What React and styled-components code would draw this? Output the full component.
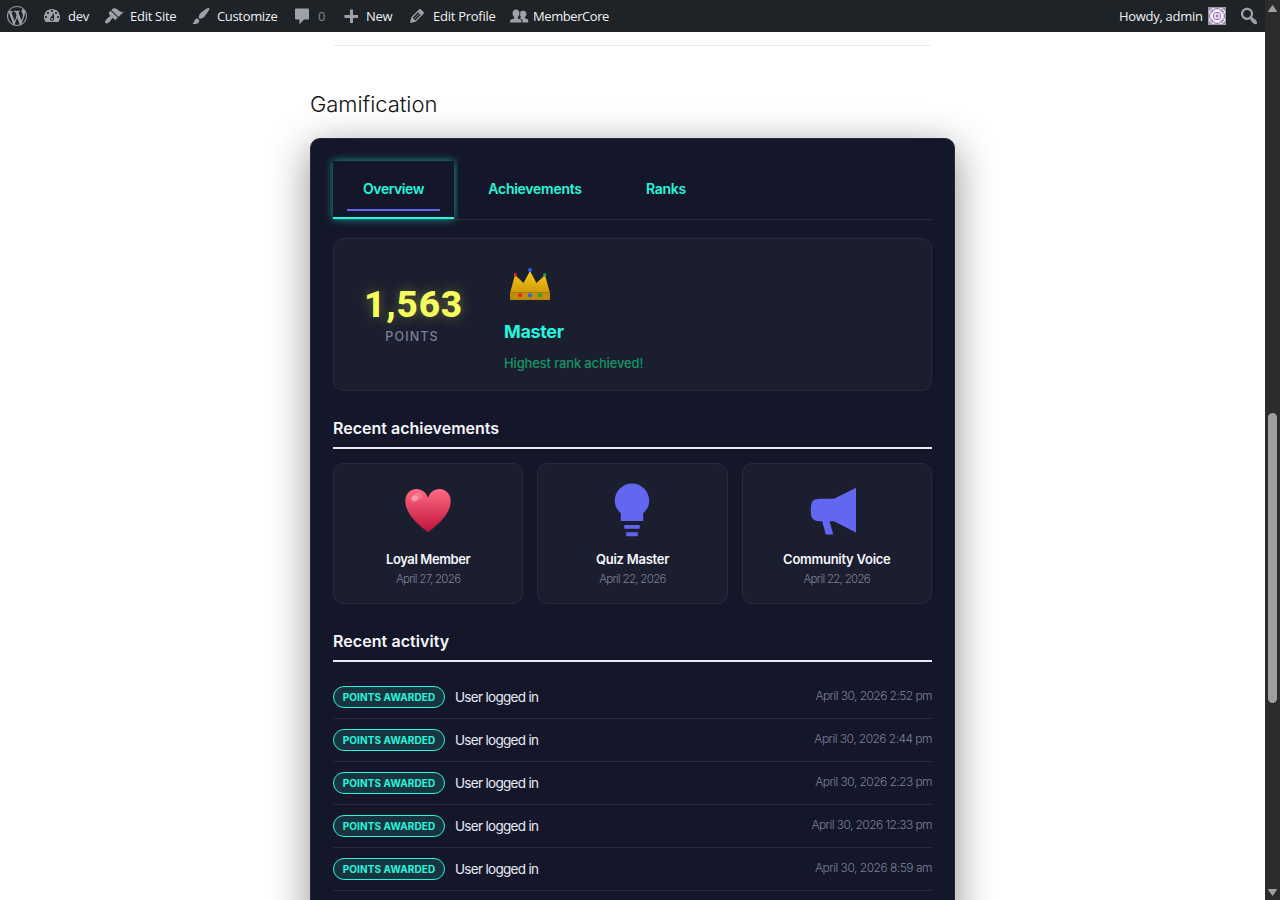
import styled, { createGlobalStyle } from "styled-components";

const GlobalStyle = createGlobalStyle`
  * {
    box-sizing: border-box;
  }
  body {
    margin: 0;
    background: #fff;
    overflow: hidden;
    font-family: Inter, "Liberation Sans", sans-serif;
  }
`;

const Window = styled.div`
  display: grid;
  grid-template-columns: 1fr 15px;
  width: 1280px;
  height: 900px;
  overflow: hidden;
`;

const Page = styled.div`
  display: flex;
  flex-direction: column;
  height: 900px;
  overflow: hidden;
`;

const AdminBar = styled.header`
  display: flex;
  align-items: center;
  flex: none;
  height: 32px;
  padding: 0 6px 0 7px;
  background: #1d2327;
  color: #f0f0f1;
  font-family: "Open Sans", "Noto Sans", sans-serif;
  font-size: 13px;
  position: relative;
  z-index: 1;
`;

const AdminItem = styled.div`
  display: flex;
  align-items: center;
  width: ${(props) => props.width}px;
  gap: ${(props) => props.gap || 6}px;
  margin-left: ${(props) => props.push || "0"};
  color: ${(props) => (props.muted ? "#7f868c" : "inherit")};
  letter-spacing: ${(props) => props.tracking || 0}px;
  white-space: nowrap;
`;

const AdminIcon = styled.svg`
  flex: none;
  width: 20px;
  height: 20px;
  fill: #9ca2a7;
`;

const Avatar = styled.svg`
  flex: none;
  width: 18px;
  height: 18px;
`;

const Content = styled.main`
  width: 645px;
  margin: 0 auto;
`;

const Divider = styled.hr`
  height: 1px;
  margin: 13px 24px 0;
  border: 0;
  background: #ececec;
`;

const PageTitle = styled.h2`
  height: 30px;
  margin: 43px 0 19px;
  color: #111;
  font-size: 22px;
  font-weight: 300;
  line-height: 30px;
  letter-spacing: -0.04px;
`;

const Card = styled.section`
  height: 900px;
  padding: 22px;
  border: 1px solid #272a3d;
  border-radius: 10px;
  background: #141729;
  box-shadow: 0 10px 40px rgba(0, 0, 0, 0.45);
`;

const Tabs = styled.nav`
  display: flex;
  gap: 4px;
  height: 59px;
  border-bottom: 1px solid #272a3b;
`;

const Tab = styled.button`
  position: relative;
  flex: none;
  width: ${(props) => props.width}px;
  height: 58px;
  padding: 0 0 2px;
  border: 0;
  border-bottom: 2px solid ${(props) => (props.active ? "#23f7dd" : "transparent")};
  background: #141729;
  color: #23f7dd;
  box-shadow: ${(props) =>
    props.active ? "0 0 8px rgba(35, 247, 221, 0.6)" : "none"};
  font: 600 14px Inter, sans-serif;
  letter-spacing: ${(props) => props.tracking}px;

  &::after {
    content: "";
    display: ${(props) => (props.active ? "block" : "none")};
    position: absolute;
    right: 14px;
    bottom: 6px;
    left: 14px;
    height: 2px;
    background: #6366f1;
  }
`;

const Summary = styled.div`
  display: flex;
  align-items: flex-start;
  height: 153px;
  margin-top: 18px;
  border: 1px solid #272a3b;
  border-radius: 10px;
  background: #1b1e2e;
`;

const Points = styled.div`
  width: 170px;
  padding: 42px 14px 0 0;
  text-align: center;
`;

const PointsValue = styled.div`
  height: 47px;
  padding-left: 3px;
  color: #f5ff5e;
  font: 800 37px/47px Roboto, sans-serif;
  letter-spacing: 0.8px;
  text-shadow: 0 0 12px rgba(245, 255, 94, 0.35);
`;

const PointsLabel = styled.div`
  color: #7d8098;
  font-size: 12.5px;
  font-weight: 500;
  line-height: 18px;
  letter-spacing: 1.1px;
`;

const Rank = styled.div`
  display: flex;
  flex-direction: column;
  padding-top: 21px;
`;

const CrownIcon = styled.svg`
  width: 52px;
  height: 52px;
`;

const RankName = styled.div`
  height: 28px;
  margin-top: 6px;
  color: #23f7dd;
  font-size: 18px;
  font-weight: 700;
  line-height: 28px;
  letter-spacing: -0.35px;
`;

const RankNote = styled.div`
  margin-top: 7px;
  color: #129567;
  font-size: 13px;
  font-weight: 500;
  line-height: 20px;
  letter-spacing: -0.15px;
`;

const SectionTitle = styled.h3`
  height: 33px;
  margin: 25px 0 14px;
  border-bottom: 2px solid #e8eaf6;
  color: #f5f6fc;
  font-size: 16px;
  font-weight: 600;
  line-height: 24px;
  letter-spacing: ${(props) => props.tracking}px;
`;

const AchievementGrid = styled.div`
  display: grid;
  grid-template-columns: repeat(3, 1fr);
  gap: 14px;
`;

const Achievement = styled.article`
  display: flex;
  flex-direction: column;
  align-items: center;
  height: 141px;
  padding-top: 18px;
  border: 1px solid #272a3b;
  border-radius: 10px;
  background: #1b1e2e;
`;

const AchievementIcon = styled.svg`
  width: 56px;
  height: 56px;
  fill: #6366f1;
`;

const AchievementName = styled.div`
  margin-top: 11px;
  color: #f5f6fc;
  font-size: 13px;
  font-weight: 600;
  line-height: 20px;
  letter-spacing: ${(props) => props.tracking}px;
`;

const AchievementDate = styled.div`
  color: #7d8098;
  font-size: 11.5px;
  font-weight: 300;
  line-height: 20px;
  letter-spacing: -0.7px;
`;

const ActivityRow = styled.div`
  display: flex;
  align-items: center;
  height: 43px;
  border-bottom: 1px solid #272a3b;
`;

const Badge = styled.span`
  display: flex;
  align-items: center;
  justify-content: center;
  width: 112px;
  height: 22px;
  border: 1px solid #23f7dd;
  border-radius: 11px;
  background: #183441;
  color: #23f7dd;
  font-size: 10px;
  font-weight: 700;
  letter-spacing: 0.1px;
  white-space: nowrap;
`;

const ActivityText = styled.span`
  margin-left: 10px;
  color: #e8eaf6;
  font-size: 13.5px;
  letter-spacing: -0.7px;
`;

const ActivityTime = styled.time`
  margin: -3px 0 0 auto;
  color: #7d8098;
  font-size: 12px;
  font-weight: 300;
  letter-spacing: ${(props) => props.tracking}px;
`;

const Scrollbar = styled.div`
  display: flex;
  flex-direction: column;
  align-items: center;
  justify-content: space-between;
  padding: 5px 0 4px;
  background: #2c2c2c;
`;

const ScrollArrow = styled.svg`
  width: 9px;
  height: 7px;
  fill: #9f9f9f;
`;

const ScrollThumb = styled.div`
  width: 9px;
  height: 290px;
  margin-top: 215px;
  border-radius: 5px;
  background: #9f9f9f;
`;

const icons = {
  wordpress:
    "M20 10c0-5.51-4.49-10-10-10C4.48 0 0 4.49 0 10c0 5.52 4.48 10 10 10 5.51 0 10-4.48 10-10zM7.78 15.37L4.37 6.22c.55-.02 1.17-.08 1.17-.08.5-.06.44-1.13-.06-1.11 0 0-1.45.11-2.37.11-.18 0-.37 0-.58-.01C4.12 2.69 6.87 1.11 10 1.11c2.33 0 4.45.87 6.05 2.34-.68-.11-1.65.39-1.65 1.58 0 .74.45 1.36.9 2.1.35.61.55 1.36.55 2.46 0 1.49-1.4 5-1.4 5l-3.03-8.37c.54-.02.82-.17.82-.17.5-.05.44-1.25-.06-1.22 0 0-1.44.12-2.38.12-.87 0-2.33-.12-2.33-.12-.5-.03-.56 1.2-.06 1.22l.92.08 1.26 3.41zM17.41 10c.24-.64.74-1.87.43-4.25.7 1.29 1.05 2.71 1.05 4.25 0 3.29-1.73 6.24-4.4 7.78.97-2.59 1.94-5.2 2.92-7.78zM6.1 18.09C3.12 16.65 1.11 13.53 1.11 10c0-1.3.23-2.48.72-3.59C3.25 10.3 4.67 14.2 6.1 18.09zm4.03-6.63l2.58 6.98c-.86.29-1.76.45-2.71.45-.79 0-1.57-.11-2.29-.33.81-2.38 1.62-4.74 2.42-7.1z",
  dashboard:
    "M3.76 16h12.48c1.1-1.37 1.76-3.11 1.76-5 0-4.42-3.58-8-8-8s-8 3.58-8 8c0 1.89.66 3.63 1.76 5zM10 4c.55 0 1 .45 1 1s-.45 1-1 1-1-.45-1-1 .45-1 1-1zM6 6c.55 0 1 .45 1 1s-.45 1-1 1-1-.45-1-1 .45-1 1-1zm8 0c.55 0 1 .45 1 1s-.45 1-1 1-1-.45-1-1 .45-1 1-1zm-5.37 5.55L12 7v6c0 1.1-.9 2-2 2s-2-.9-2-2c0-.57.24-1.08.63-1.45zM4 10c.55 0 1 .45 1 1s-.45 1-1 1-1-.45-1-1 .45-1 1-1zm12 0c.55 0 1 .45 1 1s-.45 1-1 1-1-.45-1-1 .45-1 1-1zm-5 3c0-.55-.45-1-1-1s-1 .45-1 1 .45 1 1 1 1-.45 1-1z",
  appearance:
    "M14.48 11.06L7.41 3.99l1.5-1.5c.5-.56 2.3-.47 3.51.32 1.21.8 1.43 1.28 2.91 2.1 1.18.64 2.45 1.26 4.45.85zm-.71.71L6.7 4.7 4.93 6.47c-.39.39-.39 1.02 0 1.41l1.06 1.06c.39.39.39 1.03 0 1.42-.6.6-1.43 1.11-2.21 1.69-.35.26-.7.53-1.01.84C1.43 14.23.4 16.08 1.4 17.07c.99 1 2.84-.03 4.18-1.36.31-.31.58-.66.85-1.02.57-.78 1.08-1.61 1.69-2.21.39-.39 1.02-.39 1.41 0l1.06 1.06c.39.39 1.02.39 1.41 0z",
  customize:
    "M18.33 3.57s.27-.8-.31-1.36c-.53-.52-1.22-.24-1.22-.24-.61.3-5.76 3.47-7.67 5.57-.86.96-2.06 3.79-1.09 4.82.92.98 3.96-.17 4.79-1 2.06-2.06 5.21-7.17 5.5-7.79zM1.4 17.65c2.37-1.56 1.46-3.41 3.23-4.64.93-.65 2.22-.62 3.08.29.63.67.8 2.57-.16 3.46-1.57 1.45-4 1.55-6.15.89z",
  comment:
    "M4 2.500h11.800c.8 0 1.200.5 1.200 1.200v8.600c0 .8-.5 1.200-1.200 1.200H12l-4.600 5v-5H4C3.300 13.500 3 13 3 12.300V3.700C3 3 3.300 2.500 4 2.500z",
  plus: "M17 9v3h-5v5H9v-5H3.500V9H9V3.500h3V9z",
  edit: "M13.89 3.39l2.71 2.72c.46.46.42 1.24.03 1.64l-8.01 8.02-5.56 1.16 1.16-5.58s7.6-7.63 7.99-8.03c.39-.39 1.22-.39 1.68.07zm-2.73 2.79l-5.59 5.61 1.11 1.11 5.54-5.65zm-2.97 8.23l5.58-5.6-1.07-1.08-5.59 5.6z",
  members:
    "M7 3.500c2.300 0 3.700 1.700 3.500 4-.1 1.600-.9 3-1.700 3.600v1.300l2.600 1.100c.8.400 1.100 1 1.100 2V16.500H1v-1c0-1 .4-1.600 1.200-2l3-1.100v-1.300C4.300 10.400 3.600 9 3.500 7.500 3.300 5.200 4.700 3.500 7 3.500zM14.200 4.700c2.100 0 3.300 1.500 3.200 3.400-.1 1.400-.7 2.500-1.500 3v1.100l2.200.9c.8.300 1.100.9 1.100 1.800v1.600h-5.700v-1.100c0-1.300-.6-2-1.500-2.400l-1.300-.6c.6-.3 1.100-.7 1.300-1.100v-.4c-.6-.5-.9-1.200-1-2.100.4-.9.400-2 .2-2.900.6-.6 1.700-1.200 3-1.200z",
  search:
    "M12.14 4.18c1.87 1.87 2.11 4.75.72 6.89.12.1.22.21.36.31.2.16.47.36.81.59.34.24.56.39.66.47.42.31.73.57.94.78.32.32.6.65.84 1 .25.35.44.69.59 1.04.14.35.21.68.18 1-.02.32-.14.59-.36.81s-.49.34-.81.36c-.31.02-.65-.04-.99-.19-.35-.14-.7-.34-1.04-.59-.35-.24-.68-.52-1-.84-.21-.21-.47-.52-.77-.93-.1-.13-.25-.35-.47-.66-.22-.32-.4-.57-.56-.78-.16-.2-.29-.35-.44-.5-2.07 1.09-4.69.76-6.44-.98-2.14-2.15-2.14-5.64 0-7.78 2.15-2.15 5.63-2.15 7.78 0zm-1.41 6.36c1.36-1.37 1.36-3.58 0-4.95-1.37-1.37-3.59-1.37-4.95 0-1.37 1.37-1.37 3.58 0 4.95 1.36 1.37 3.58 1.37 4.95 0z",
};

const menu = [
  { icon: "wordpress", width: 35 },
  { icon: "dashboard", label: "dev", width: 62, tracking: -0.2 },
  { icon: "appearance", label: "Edit Site", width: 87, tracking: -0.27 },
  { icon: "customize", label: "Customize", width: 101, tracking: -0.33 },
  { icon: "comment", label: "0", width: 49, muted: true },
  { icon: "plus", label: "New", width: 66, gap: 5, tracking: -0.3 },
  { icon: "edit", label: "Edit Profile", width: 102, tracking: -0.26 },
  { icon: "members", label: "MemberCore", width: 110, gap: 4, tracking: -0.43 },
];

// one quarter of the identicon, mirrored on both axes
const avatarCells = [
  "110011",
  "101100",
  "011000",
  "010011",
  "100100",
  "100101",
];

const achievements = [
  { name: "Loyal Member", date: "April 27, 2026", icon: "heart", tracking: -0.38 },
  { name: "Quiz Master", date: "April 22, 2026", icon: "bulb", tracking: -0.25 },
  { name: "Community Voice", date: "April 22, 2026", icon: "megaphone", tracking: -0.26 },
];

const activity = [
  { time: "April 30, 2026 2:52 pm", tracking: -0.56 },
  { time: "April 30, 2026 2:44 pm", tracking: -0.54 },
  { time: "April 30, 2026 2:23 pm", tracking: -0.56 },
  { time: "April 30, 2026 12:33 pm", tracking: -0.57 },
  { time: "April 30, 2026 8:59 am", tracking: -0.5 },
];

function BarIcon({ name, viewBox = "0 0 20 20" }) {
  return (
    <AdminIcon viewBox={viewBox}>
      <path d={icons[name]} fillRule="evenodd" />
    </AdminIcon>
  );
}

function Identicon() {
  return (
    <Avatar viewBox="0 0 18 18">
      <rect width="18" height="18" fill="#9a9ca2" />
      <rect x="1" y="1" width="16" height="16" fill="#f7f4fa" />
      {avatarCells.map((row, y) =>
        [...row].map(
          (cell, x) =>
            cell === "1" &&
            [x, 11 - x].map((cx) =>
              [y, 11 - y].map((cy) => (
                <rect
                  key={`${cx}-${cy}`}
                  x={1 + cx * 1.333}
                  y={1 + cy * 1.333}
                  width="1.333"
                  height="1.333"
                  fill="#9878bc"
                />
              ))
            )
        )
      )}
    </Avatar>
  );
}

function Crown() {
  return (
    <CrownIcon viewBox="0 0 52 52">
      <defs>
        <linearGradient id="gold" x1="0" y1="0" x2="0" y2="1">
          <stop offset="0" stopColor="#facc15" />
          <stop offset="1" stopColor="#c08a08" />
        </linearGradient>
      </defs>
      <path
        d="M6 39V33L11 15 19.500 23 26 11 32.500 23 41 15 46 33V39q0 1-1 1H7q-1 0-1-1z"
        fill="url(#gold)"
      />
      <path d="M6 32.500H46V39q0 1-1 1H7q-1 0-1-1z" fill="#b8860b" opacity=".5" />
      <path d="M6 32.500H46" stroke="#a16f08" strokeWidth=".8" />
      <circle cx="11.300" cy="14.800" r="1.700" fill="#dc2626" />
      <circle cx="26" cy="10" r="2" fill="#2563eb" />
      <circle cx="40.700" cy="14.800" r="1.700" fill="#16a34a" />
      <circle cx="16.200" cy="35.300" r="2" fill="#dc2626" />
      <circle cx="26" cy="35.300" r="2" fill="#2563eb" />
      <circle cx="35.800" cy="35.300" r="2" fill="#16a34a" />
    </CrownIcon>
  );
}

function AchievementArt({ name }) {
  if (name === "heart") {
    return (
      <AchievementIcon viewBox="0 0 56 56">
        <defs>
          <linearGradient id="heart" x1="0" y1="0" x2="0" y2="1">
            <stop offset="0" stopColor="#ff6b81" />
            <stop offset="1" stopColor="#be123c" />
          </linearGradient>
        </defs>
        <path
          d="M28 50.300C18 42.500 5.300 32 5.300 19 5.300 12 10 7 16.500 7 22 7 26.500 10.500 28 16 29.500 10.500 34 7 39.500 7 46 7 50.700 12 50.700 19 50.700 32 38 42.500 28 50.300z"
          fill="url(#heart)"
        />
        <ellipse cx="17.500" cy="14.500" rx="5.500" ry="3.800" fill="#fff" opacity=".15" transform="rotate(-20 17.500 14.500)" />
        <ellipse cx="14.700" cy="16.500" rx="3.600" ry="2.900" fill="#fff" opacity=".3" transform="rotate(-20 14.700 16.500)" />
      </AchievementIcon>
    );
  }
  if (name === "bulb") {
    return (
      <AchievementIcon viewBox="0 0 56 56">
        <path d="M28 1.400C37.500 1.400 45.200 9 45.200 18.500c0 5.400-2.300 9.500-6 12.800V39H16.800v-7.700c-3.700-3.300-6-7.400-6-12.800C10.800 9 18.500 1.400 28 1.400z" />
        <path d="M20.300 43h15.400v3.800H20.300zM22.200 50.300h11.600v4H22.200z" />
      </AchievementIcon>
    );
  }
  return (
    <AchievementIcon viewBox="0 0 56 56">
      <path d="M25 16.700 47 5.700V50.400L25 39.300H20.500L24.300 52.500H16.800L13.200 39.300H10.500Q1.800 39.300 1.800 31V25Q1.800 16.700 10.500 16.700z" />
    </AchievementIcon>
  );
}

function App() {
  return (
    <>
      <GlobalStyle />
      <Window>
        <Page>
          <AdminBar>
            {menu.map((item) => (
              <AdminItem
                key={item.icon}
                width={item.width}
                gap={item.gap}
                muted={item.muted}
                tracking={item.tracking}
              >
                <BarIcon name={item.icon} />
                {item.label}
              </AdminItem>
            ))}
            <AdminItem push="auto" width={120} gap={5} tracking={-0.3}>
              Howdy, admin
              <Identicon />
            </AdminItem>
            <AdminItem width={20}>
              <BarIcon name="search" viewBox="1 1 18 18" />
            </AdminItem>
          </AdminBar>

          <Content>
            <Divider />
            <PageTitle>Gamification</PageTitle>
            <Card>
              <Tabs>
                <Tab active width={121} tracking={-0.45}>
                  Overview
                </Tab>
                <Tab width={154} tracking={-0.27}>
                  Achievements
                </Tab>
                <Tab width={100} tracking={-0.3}>
                  Ranks
                </Tab>
              </Tabs>

              <Summary>
                <Points>
                  <PointsValue>1,563</PointsValue>
                  <PointsLabel>POINTS</PointsLabel>
                </Points>
                <Rank>
                  <Crown />
                  <RankName>Master</RankName>
                  <RankNote>Highest rank achieved!</RankNote>
                </Rank>
              </Summary>

              <SectionTitle tracking={0}>Recent achievements</SectionTitle>
              <AchievementGrid>
                {achievements.map((item) => (
                  <Achievement key={item.name}>
                    <AchievementArt name={item.icon} />
                    <AchievementName tracking={item.tracking}>
                      {item.name}
                    </AchievementName>
                    <AchievementDate>{item.date}</AchievementDate>
                  </Achievement>
                ))}
              </AchievementGrid>

              <SectionTitle tracking={0.07}>Recent activity</SectionTitle>
              {activity.map((item) => (
                <ActivityRow key={item.time}>
                  <Badge>POINTS AWARDED</Badge>
                  <ActivityText>User logged in</ActivityText>
                  <ActivityTime tracking={item.tracking}>{item.time}</ActivityTime>
                </ActivityRow>
              ))}
            </Card>
          </Content>
        </Page>

        <Scrollbar>
          <ScrollArrow viewBox="0 0 9 7">
            <path d="M4.500 0 9 6.200Q9 7 8 7H1Q0 7 0 6.200z" />
          </ScrollArrow>
          <ScrollThumb />
          <ScrollArrow viewBox="0 0 9 7">
            <path d="M4.500 7 0 .8Q0 0 1 0H8Q9 0 9 .8z" />
          </ScrollArrow>
        </Scrollbar>
      </Window>
    </>
  );
}

export default App;
